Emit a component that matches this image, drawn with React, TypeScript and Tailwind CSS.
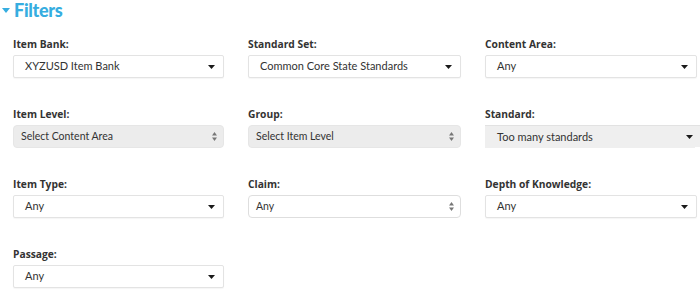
import React from "react";

type Field = {
  label: string;
  value: string;
  kind: "plain" | "disabled" | "native" | "standard";
};

const fields: Field[] = [
  { label: "Item Bank:", value: "XYZUSD Item Bank", kind: "plain" },
  { label: "Standard Set:", value: "Common Core State Standards", kind: "plain" },
  { label: "Content Area:", value: "Any", kind: "plain" },
  { label: "Item Level:", value: "Select Content Area", kind: "disabled" },
  { label: "Group:", value: "Select Item Level", kind: "disabled" },
  { label: "Standard:", value: "Too many standards", kind: "standard" },
  { label: "Item Type:", value: "Any", kind: "plain" },
  { label: "Claim:", value: "Any", kind: "native" },
  { label: "Depth of Knowledge:", value: "Any", kind: "plain" },
  { label: "Passage:", value: "Any", kind: "plain" },
];

function Caret() {
  return (
    <svg width="7" height="4" viewBox="0 0 7 4" className="shrink-0">
      <path d="M0 0 H7 L3.5 4 Z" fill="#1a1a1a" />
    </svg>
  );
}

function UpDown() {
  return (
    <svg width="5" height="9" viewBox="0 0 5 9" className="shrink-0">
      <path d="M0 3.5 L2.5 0 L5 3.5 Z" fill="#777" />
      <path d="M0 5.5 H5 L2.5 9 Z" fill="#777" />
    </svg>
  );
}

function SelectBox({ field }: { field: Field }) {
  if (field.kind === "disabled" || field.kind === "native") {
    const bg = field.kind === "disabled" ? "bg-[#ececec] border-[#e6e6e6]" : "bg-white border-[#dedede]";
    return (
      <div className={`flex items-center justify-between h-[23px] pl-[7px] pr-[6px] rounded-[4px] border ${bg}`}>
        <span className="text-[10.5px] text-[#333] font-['Lato',sans-serif]">{field.value}</span>
        <UpDown />
      </div>
    );
  }
  if (field.kind === "standard") {
    return (
      <div className="relative flex items-center justify-between h-[23px] pl-[12px] pr-[8px] bg-[#efefef] border-t border-[#e2e2e2] -mr-[4px]">
        <span className="text-[11px] text-[#333] font-['Lato',sans-serif]">{field.value}</span>
        <Caret />
        <div className="absolute right-0 -bottom-[1px] w-[6px] h-[2px] bg-white" />
      </div>
    );
  }
  return (
    <div className="flex items-center justify-between h-[23px] pl-[11px] pr-[8px] bg-white border border-[#e3e3e3] rounded-[2px] shadow-[0_1px_1px_rgba(0,0,0,0.04)]">
      <span className="text-[11px] text-[#333] font-['Lato',sans-serif]">{field.value}</span>
      <Caret />
    </div>
  );
}

export default function App() {
  return (
    <div className="w-[700px] h-[293px] bg-white overflow-hidden font-['Open_Sans',sans-serif]">
      <div className="flex items-center h-[20px] pl-[2px] gap-[4px]">
        <svg width="8" height="5" viewBox="0 0 8 5">
          <path d="M0 0 H8 L4 5 Z" fill="#36ade0" />
        </svg>
        <h2 className="text-[18px] leading-[20px] font-black tracking-[-0.3px] text-[#36ade0] font-['Lato',sans-serif]">Filters</h2>
      </div>

      <div className="grid grid-cols-[211px_213px_212px] gap-x-[24px] gap-y-[29px] ml-[13px] mt-[17px]">
        {fields.map((f) => (
          <div key={f.label} className="flex flex-col">
            <label className="text-[10.25px] leading-[14px] font-bold text-[#333] mb-[4px]">{f.label}</label>
            <SelectBox field={f} />
          </div>
        ))}
      </div>
    </div>
  );
}
